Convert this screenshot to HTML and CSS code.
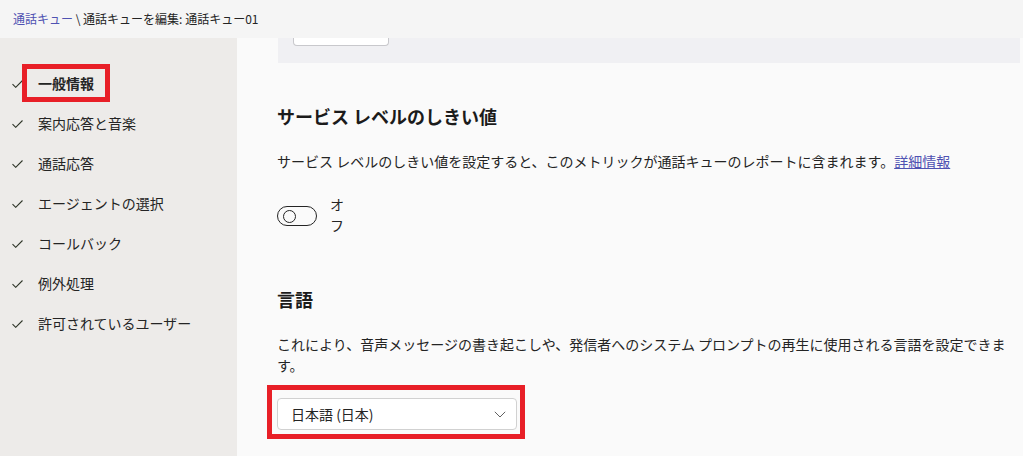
FILE: index.html
```html
<!DOCTYPE html>
<html lang="ja">
<head>
<meta charset="utf-8">
<title>通話キューを編集</title>
<link rel="stylesheet" href="styles.css">
</head>
<body>
<div class="topbar">
  <span class="crumb-link">通話キュー</span><span class="crumb-sep"> \ </span><span class="crumb">通話キューを編集: 通話キュー01</span>
</div>
<div class="layout">
  <nav class="sidebar">
    <div class="nav-item active">
      <svg class="check" width="11" height="8" viewBox="0 0 11 8"><path d="M0.5 4.2 L3.7 7.3 L10.5 0.5" fill="none" stroke="#2e3528" stroke-width="1.1"/></svg>
      <span class="nav-label">一般情報</span>
      <span class="annot annot-nav"></span>
    </div>
    <div class="nav-item">
      <svg class="check" width="11" height="8" viewBox="0 0 11 8"><path d="M0.5 4.2 L3.7 7.3 L10.5 0.5" fill="none" stroke="#2e3528" stroke-width="1.1"/></svg>
      <span class="nav-label">案内応答と音楽</span>
    </div>
    <div class="nav-item">
      <svg class="check" width="11" height="8" viewBox="0 0 11 8"><path d="M0.5 4.2 L3.7 7.3 L10.5 0.5" fill="none" stroke="#2e3528" stroke-width="1.1"/></svg>
      <span class="nav-label">通話応答</span>
    </div>
    <div class="nav-item">
      <svg class="check" width="11" height="8" viewBox="0 0 11 8"><path d="M0.5 4.2 L3.7 7.3 L10.5 0.5" fill="none" stroke="#2e3528" stroke-width="1.1"/></svg>
      <span class="nav-label">エージェントの選択</span>
    </div>
    <div class="nav-item">
      <svg class="check" width="11" height="8" viewBox="0 0 11 8"><path d="M0.5 4.2 L3.7 7.3 L10.5 0.5" fill="none" stroke="#2e3528" stroke-width="1.1"/></svg>
      <span class="nav-label">コールバック</span>
    </div>
    <div class="nav-item">
      <svg class="check" width="11" height="8" viewBox="0 0 11 8"><path d="M0.5 4.2 L3.7 7.3 L10.5 0.5" fill="none" stroke="#2e3528" stroke-width="1.1"/></svg>
      <span class="nav-label">例外処理</span>
    </div>
    <div class="nav-item">
      <svg class="check" width="11" height="8" viewBox="0 0 11 8"><path d="M0.5 4.2 L3.7 7.3 L10.5 0.5" fill="none" stroke="#2e3528" stroke-width="1.1"/></svg>
      <span class="nav-label">許可されているユーザー</span>
    </div>
  </nav>
  <main class="main">
    <div class="panel">
      <div class="panel-input"></div>
    </div>
    <section class="section section-sl">
      <h2 class="heading">サービス レベルのしきい値</h2>
      <p class="desc">サービス レベルのしきい値を設定すると、このメトリックが通話キューのレポートに含まれます。<a class="link" href="#">詳細情報</a></p>
      <div class="toggle-row">
        <span class="toggle"><span class="knob"></span></span>
        <span class="toggle-label">オフ</span>
      </div>
    </section>
    <section class="section section-lang">
      <h2 class="heading">言語</h2>
      <p class="desc">これにより、音声メッセージの書き起こしや、発信者へのシステム プロンプトの再生に使用される言語を設定できます。</p>
      <div class="dropdown-wrap">
        <div class="dropdown">
          <span class="dropdown-text">日本語 (日本)</span>
          <svg class="chevron" width="12" height="7" viewBox="0 0 12 7"><path d="M0.8 0.8 L6 6 L11.2 0.8" fill="none" stroke="#616161" stroke-width="1"/></svg>
        </div>
        <span class="annot annot-dd"></span>
      </div>
    </section>
  </main>
</div>
</body>
</html>
```

FILE: styles.css
```css
html, body {
  margin: 0;
  padding: 0;
}
body {
  width: 1023px;
  height: 456px;
  overflow: hidden;
  font-family: "Noto Sans CJK JP", "Noto Sans", sans-serif;
  color: #242424;
  background: #fafafa;
}
.topbar {
  height: 38px;
  background: #f5f5f5;
  display: flex;
  align-items: center;
  padding-left: 13px;
  font-size: 12px;
  line-height: 16px;
  white-space: pre;
}
.crumb-link {
  color: #4f52b2;
}
.crumb, .crumb-sep {
  color: #242424;
}
.layout {
  display: flex;
  height: 418px;
}
.sidebar {
  width: 237px;
  flex: none;
  background: #edebe9;
  padding-top: 25px;
  box-sizing: border-box;
}
.nav-item {
  position: relative;
  height: 40px;
  display: flex;
  align-items: center;
  padding-left: 12px;
  font-size: 14px;
}
.check {
  flex: none;
  margin-top: 2px;
}
.nav-label {
  margin-left: 15px;
}
.nav-item.active .nav-label {
  font-weight: 700;
}
.annot {
  position: absolute;
  border: 5px solid #e81f27;
  box-sizing: border-box;
  pointer-events: none;
}
.annot-nav {
  left: 22px;
  top: 1px;
  width: 88px;
  height: 38px;
}
.main {
  flex: 1;
  padding-left: 40px;
  padding-right: 3px;
  box-sizing: border-box;
}
.panel {
  height: 25px;
  margin-left: 1px;
  width: 742px;
  background: #f0f0f3;
  padding-left: 15px;
  box-sizing: border-box;
}
.panel-input {
  width: 96px;
  height: 8px;
  background: #fff;
  border: 1px solid #c8c8cc;
  border-top: none;
  border-radius: 0 0 4px 4px;
  box-sizing: border-box;
}
.section-sl {
  padding-top: 42px;
}
.section-lang {
  padding-top: 52px;
}
.heading {
  margin: 0;
  font-size: 18px;
  line-height: 22px;
  font-weight: 700;
  letter-spacing: 0;
  color: #1b1b1b;
}
.desc {
  margin: 24px 0 0;
  font-size: 14px;
  line-height: 21px;
  letter-spacing: 0;
  max-width: 742px;
}
.link {
  color: #4f52b2;
  text-decoration: underline;
}
.toggle-row {
  display: flex;
  align-items: flex-start;
  margin-top: 22px;
}
.toggle {
  width: 40px;
  height: 20px;
  margin-top: 12px;
  border: 1px solid #242424;
  border-radius: 10px;
  box-sizing: border-box;
  display: flex;
  align-items: center;
  padding-left: 5px;
}
.knob {
  width: 13px;
  height: 13px;
  border: 1.5px solid #242424;
  border-radius: 50%;
  box-sizing: border-box;
}
.toggle-label {
  width: 14px;
  margin-left: 13px;
  font-size: 14px;
  line-height: 21px;
}
.dropdown-wrap {
  position: relative;
  width: 240px;
  margin-top: 22px;
}
.dropdown {
  height: 32px;
  background: #fff;
  border: 1px solid #d1d1d1;
  border-radius: 4px;
  box-sizing: border-box;
  display: flex;
  align-items: center;
  justify-content: space-between;
  padding: 0 10px 0 13px;
  font-size: 14px;
}
.annot-dd {
  left: -10px;
  top: -13px;
  width: 258px;
  height: 54px;
}
```
